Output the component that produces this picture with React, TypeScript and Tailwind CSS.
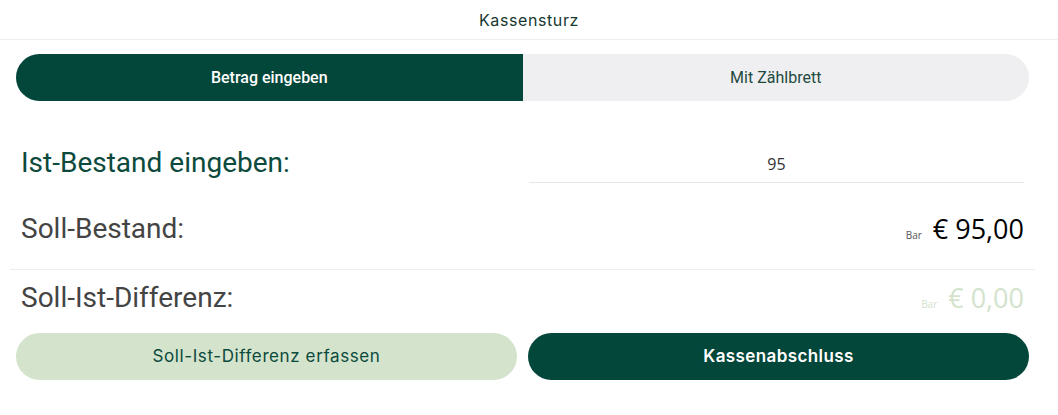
import { useState } from "react";

const green = "#03463a";

export default function App() {
  const [mode, setMode] = useState<"betrag" | "brett">("betrag");
  const [ist, setIst] = useState("95");

  return (
    <div className="w-[1058px] h-[415px] bg-white font-['Roboto',sans-serif]">
      <header className="h-10 flex items-center justify-center border-b border-[#eeeeee] font-['Inter',sans-serif] text-[16px] tracking-[0.6px] text-[#17382f]">
        Kassensturz
      </header>

      <div className="pl-4 pr-[29px] pt-[14px]">
        {/* mode tabs */}
        <div className="flex h-[47px] rounded-full overflow-hidden bg-[#efeff1]">
          <button
            onClick={() => setMode("betrag")}
            className={`flex-1 text-[16px] ${
              mode === "betrag" ? "bg-[#03463a] text-white font-medium" : "text-[#1f4a3f]"
            }`}
          >
            Betrag eingeben
          </button>
          <button
            onClick={() => setMode("brett")}
            className={`flex-1 text-[16px] ${
              mode === "brett" ? "bg-[#03463a] text-white font-medium" : "text-[#1f4a3f]"
            }`}
          >
            Mit Zählbrett
          </button>
        </div>

        {/* Ist-Bestand */}
        <div className="mt-[39px] h-[46px] px-[5px] flex items-center justify-between">
          <span className="text-[28px] text-[#0b4a3c]">Ist-Bestand eingeben:</span>
          <input
            value={ist}
            onChange={(e) => setIst(e.target.value)}
            className="w-[495px] h-[37px] mt-[3px] border-b border-[#e8e8e8] text-center text-[16px] text-[#333] font-['Open_Sans',sans-serif] outline-none"
          />
        </div>

        {/* Soll-Bestand */}
        <div className="mt-[20px] h-[46px] px-[5px] flex items-center justify-between">
          <span className="text-[28px] text-[#444444]">Soll-Bestand:</span>
          <span className="flex items-baseline gap-[11px] font-['Open_Sans',sans-serif]">
            <span className="text-[10px] text-[#555]">Bar</span>
            <span className="text-[27px] text-black">€ 95,00</span>
          </span>
        </div>

        <div className="mt-[17px] -mx-[6px] h-px bg-[#eeeeee]" />

        {/* Differenz */}
        <div className="mt-[6px] h-[44px] px-[5px] flex items-center justify-between">
          <span className="text-[28px] text-[#444444]">Soll-Ist-Differenz:</span>
          <span className="flex items-baseline gap-[11px] font-['Open_Sans',sans-serif] text-[#d3e3cc]">
            <span className="text-[10px]">Bar</span>
            <span className="text-[27px]">€ 0,00</span>
          </span>
        </div>

        {/* actions */}
        <div className="mt-[13px] flex gap-[11px]">
          <button className="flex-1 h-[47px] rounded-full bg-[#d3e3cc] text-[#0b4a3c] text-[17px] tracking-[0.6px] font-['Inter',sans-serif]">
            Soll-Ist-Differenz erfassen
          </button>
          <button
            className="flex-1 h-[47px] rounded-full text-white text-[17px] font-semibold tracking-[0.4px] font-['Inter',sans-serif]"
            style={{ backgroundColor: green }}
          >
            Kassenabschluss
          </button>
        </div>
      </div>
    </div>
  );
}
